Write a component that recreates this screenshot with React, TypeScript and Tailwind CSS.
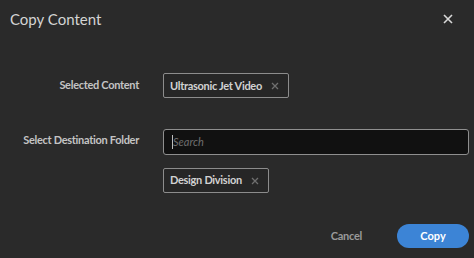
import React from 'react';

const font = { fontFamily: '"Lato", "Liberation Sans", sans-serif' };

const Tag: React.FC<{ label: string }> = ({ label }) => (
  <div className="inline-flex h-[25px] items-center gap-[9px] rounded-[2px] border border-[#8c8c8c] bg-[#262626] pl-[6px] pr-[9px]">
    <span className="text-[11px] font-bold tracking-[-0.3px] text-[#d2d2d2]">{label}</span>
    <svg width="8" height="8" viewBox="0 0 8 8" className="text-[#6f6f6f]">
      <path d="M1 1L7 7M7 1L1 7" stroke="currentColor" strokeWidth="1.3" />
    </svg>
  </div>
);

export default function App() {
  return (
    <div className="flex h-[258px] w-[474px] flex-col bg-[#2a2a2a]" style={font}>
      <div className="flex items-center justify-between pl-[10px] pr-[21px] pt-[8px]">
        <h1 className="text-[15px] font-normal text-[#d4d4d4]">Copy Content</h1>
        <svg width="10" height="10" viewBox="0 0 10 10" className="text-[#d8d8d8]">
          <path d="M1 1L9 9M9 1L1 9" stroke="currentColor" strokeWidth="1.6" />
        </svg>
      </div>

      <div className="mt-[41px] grid grid-cols-[139px_1fr] gap-x-[24px] pr-[5px]">
        <div className="flex items-center justify-end text-[11px] font-bold tracking-[-0.3px] text-[#c4c4c4]">Selected Content</div>
        <div>
          <Tag label="Ultrasonic Jet Video" />
        </div>

        <div className="mt-[31px] pt-[3px] text-right text-[11px] font-bold tracking-[-0.3px] text-[#c4c4c4]">Select Destination Folder</div>
        <div className="mt-[31px] flex flex-col items-start">
          <div className="flex h-[26px] w-full items-center rounded-[3px] border border-[#8f8f8f] bg-[#111111] pl-[8px]">
            <span className="h-[14px] w-px bg-[#bdbdbd]" />
            <span className="text-[11px] italic text-[#6e6e6e]">Search</span>
          </div>
          <div className="mt-[11px]">
            <Tag label="Design Division" />
          </div>
        </div>
      </div>

      <div className="mt-[31px] flex items-center justify-end gap-[35px] pr-[5px]">
        <button type="button" className="text-[11px] font-bold tracking-[-0.25px] text-[#9a9a9a]">Cancel</button>
        <button type="button" className="h-[24px] w-[72px] rounded-full bg-[#3c84d6] text-[11px] font-bold text-white">Copy</button>
      </div>
    </div>
  );
}
